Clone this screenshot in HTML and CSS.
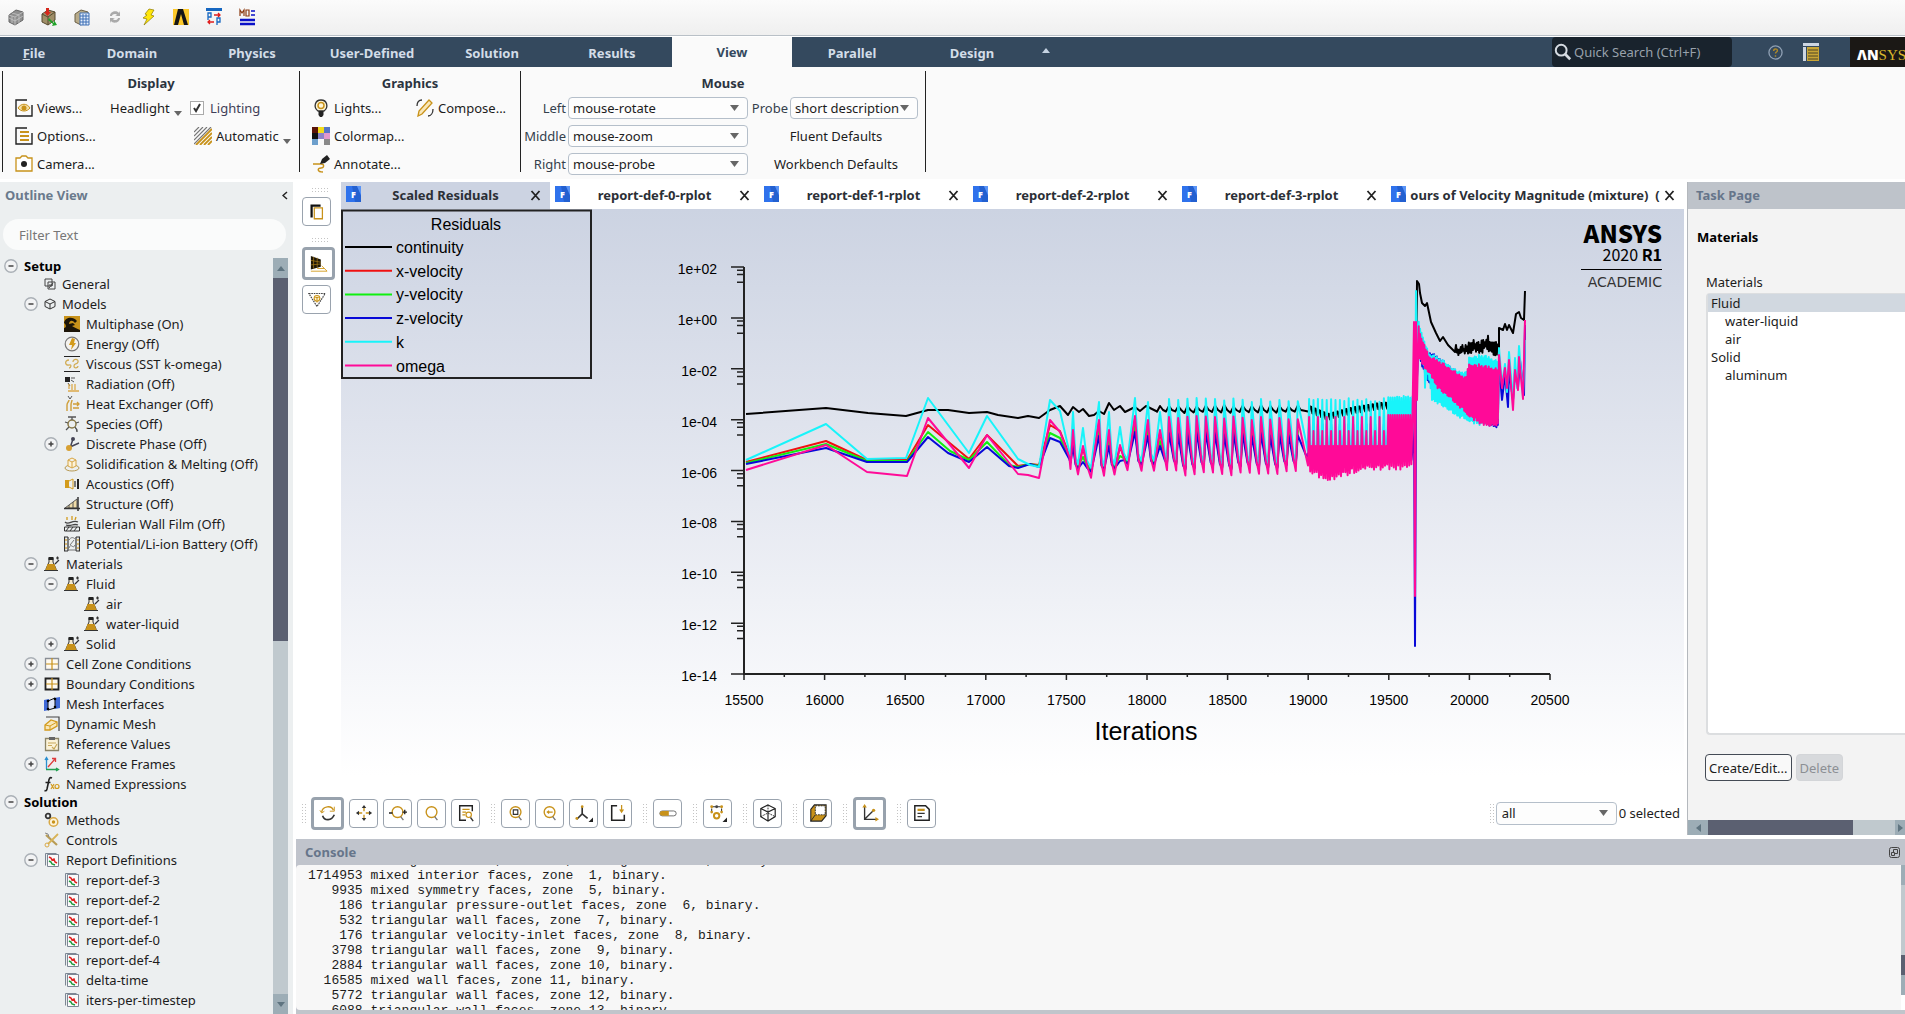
FILE: index.html
```html
<!DOCTYPE html>
<html lang="en">
<head>
    <meta charset="UTF-8">
    <meta name="viewport" content="width=device-width, initial-scale=1.0">
    <title>Fluent - Scaled Residuals</title>
    <link rel="stylesheet" href="styles.css">
</head>
<body>
    <!-- shared icons -->
    <svg class="sprite" aria-hidden="true">
        <symbol id="minus" viewBox="0 0 14 14"><circle cx="7" cy="7" r="6.2" fill="#f2f3f4" stroke="#aab0b6" stroke-width="1.4"/><path d="M4.500 7h5" stroke="#444" stroke-width="1.500"/></symbol>
        <symbol id="plus" viewBox="0 0 14 14"><circle cx="7" cy="7" r="6.2" fill="#f2f3f4" stroke="#aab0b6" stroke-width="1.4"/><path d="M4.500 7h5M7 4.500v5" stroke="#444" stroke-width="1.500"/></symbol>
        <symbol id="material" viewBox="0 0 16 16"><path d="M5 2h4v4l3 7v1H2v-1l3-7z" fill="#f4ead0" stroke="#333"/><path d="M3.500 8h7l2 6h-11z" fill="#c8921a"/><path d="M4.500 1h5v3h-5z" fill="#222"/><path d="M11 8l4-4M12 2h3M13.500 .5v3" stroke="#333" stroke-width="1.200" fill="none"/><path d="M0 14.500h14" stroke="#333"/></symbol>
        <symbol id="report" viewBox="0 0 16 16"><path d="M1.500 13.500v-12h11" fill="none" stroke="#7d8794"/><path d="M3.500 2.500h11v12h-11z" fill="#fafafa" stroke="#7d8794"/><path d="M5 5l2 1 1 2 2-1 1 3 2 1" fill="none" stroke="#e02020" stroke-width="1.500"/><path d="M5 9l2 1 1 2 3 1" fill="none" stroke="#1f9a3c" stroke-width="1.500"/></symbol>
        <symbol id="doc" viewBox="0 0 15 16"><path d="M0 0h15v16H0z" fill="#2f72ec"/><path d="M6 0h5l4 10v6H9z" fill="#2360d0"/><path d="M11 0h4v9z" fill="#5a94f5"/></symbol>
        <symbol id="close" viewBox="0 0 11 11"><path d="M1.500 1l8 9M9.500 1l-8 9" stroke="#222" stroke-width="1.800"/></symbol>
        <symbol id="down" viewBox="0 0 8 5"><path d="M0 0h8L4 5z" fill="#666"/></symbol>
        <symbol id="grid4" viewBox="0 0 16 16"><path d="M8 2v12M2 8h12" stroke="#c8921a" stroke-width="1.200"/></symbol>
        <symbol id="zoom" viewBox="0 0 20 20"><circle cx="9.500" cy="9" r="6" fill="none" stroke="#c8921a" stroke-width="1.500"/><path d="M13 14l3 4" stroke="#777" stroke-width="1.500"/></symbol>
    </svg>

    <header class="quickbar">
        <button aria-label="Mesh"><svg viewBox="0 0 16 18"><path d="M1 7l7-5 7 2v8l-8 5-6-3z" fill="#8f8f8f" stroke="#666"/><path d="M1 7l6 2 8-5M7 9v8M1 10l6 3 8-5M4 8v7M11 7v8M4 5l7 2" fill="none" stroke="#ccc" stroke-width=".7"/></svg></button>
        <button aria-label="Read case"><svg viewBox="0 0 16 18"><path d="M1 6l6-4 7 2v8l-7 5-6-3z" fill="#a08f68" stroke="#574b30"/><path d="M1 6l6 3 7-5M7 9v8" fill="none" stroke="#574b30"/><path d="M5 0h3v4h2L6.500 8 3 4h2z" fill="#d5281c"/><path d="M8 10l5 5v-3l3 5-5 1 1-2-5-4z" fill="#21a32a"/></svg></button>
        <button aria-label="Case table"><svg viewBox="0 0 16 18"><path d="M1 6l6-4 7 2v8l-7 5-6-3z" fill="#b8ab8a" stroke="#6b6047"/><path d="M6 5h9v12H6z" fill="#e6effb" stroke="#3d6fb5"/><path d="M6 8h9M6 11h9M6 14h9M9 6v11M12 6v11" stroke="#3d6fb5"/></svg></button>
        <button aria-label="Refresh"><svg viewBox="0 0 16 18"><path d="M3 8c0-5 7-6 9-3l1-2v5H8l2-1c-1-2-5-1-5 1zM13 10c0 5-7 6-9 3l-1 2v-5h5l-2 1c1 2 5 1 5-1z" fill="#aaa"/></svg></button>
        <button aria-label="Run"><svg viewBox="0 0 16 18"><path d="M9 1l5 1-3 5 3 1-10 9 3-6-4-1 4-3-2-1z" fill="#ffe60a" stroke="#8d7a00" stroke-width=".7"/></svg></button>
        <button aria-label="Workbench"><svg viewBox="0 0 16 18"><path d="M0 1h16v16H0z" fill="#fdc92b"/><path d="M1 17L5 1h5l5 16h-4L8 6 5 17z" fill="#161616"/></svg></button>
        <button aria-label="Parameters"><svg viewBox="0 0 16 18"><path d="M0 0h16v3H0z" fill="#1667c1"/><path d="M2 12V5h3v4H2M11 17v-7h3v4h-3" fill="none" stroke="#1667c1" stroke-width="1.300"/><path d="M8 7h6M12 5l2 2-2 2M8 14H2M4 12l-2 2 2 2" fill="none" stroke="#e01b1b" stroke-width="1.300"/></svg></button>
        <button aria-label="Monitor"><svg viewBox="0 0 16 18"><path d="M1 8V2l2 3 2-3v6M7 2h3v6H7z" fill="none" stroke="#8b3a10" stroke-width="1.200"/><path d="M12 3h4M12 7h4" stroke="#0a10c8" stroke-width="1.500"/><path d="M1 12h15M1 16h15" stroke="#0a10c8" stroke-width="2.500"/></svg></button>
    </header>

    <nav class="menubar">
        <a class="menu file" href="#"><u>F</u>ile</a>
        <a class="menu" href="#">Domain</a>
        <a class="menu" href="#">Physics</a>
        <a class="menu" href="#">User-Defined</a>
        <a class="menu" href="#">Solution</a>
        <a class="menu" href="#">Results</a>
        <a class="menu active" href="#">View</a>
        <a class="menu" href="#">Parallel</a>
        <a class="menu" href="#">Design</a>
        <button class="collapse" aria-label="Collapse ribbon"><svg viewBox="0 0 8 5"><path d="M0 5h8L4 0z" fill="#c5d3e2"/></svg></button>
        <div class="search">
            <svg viewBox="0 0 20 20"><circle cx="8" cy="8" r="6" fill="none" stroke="#d5dbe2" stroke-width="2.200"/><path d="M12 12l6 6" stroke="#d5dbe2" stroke-width="3"/></svg>
            <input type="text" aria-label="Quick Search" placeholder="Quick Search (Ctrl+F)">
        </div>
        <button class="help" aria-label="Help"><svg viewBox="0 0 16 16"><circle cx="8" cy="8" r="7" fill="none" stroke="#8fa0b4" stroke-width="1.400"/><path d="M6 6.500c0-3 4-3 4-.5 0 1.500-2 1.500-2 3M8 11v1.500" fill="none" stroke="#b08a28" stroke-width="1.500"/></svg></button>
        <button class="arrange" aria-label="Arrange"><svg viewBox="0 0 16 18"><path d="M0 0h16v3H0z" fill="#cdd6e2"/><path d="M0 4h3v14H0z" fill="#cdd6e2"/><path d="M4 4h12v14H4z" fill="#c8a536"/><path d="M5 7h10M5 10h10M5 13h10M5 16h10" stroke="#4c4426"/></svg></button>
        <div class="brand"><b>&Lambda;N</b><span>SYS</span></div>
    </nav>

    <section class="ribbon">
        <div class="group display">
            <h2>Display</h2>
            <div class="cols">
                <div class="col">
                    <button class="tool"><svg viewBox="0 0 18 18"><path d="M12 1H1v16h16V6" fill="none" stroke="#222" stroke-width="1.400"/><path d="M3 9c3-5 9-5 12 0-3 4-9 4-12 0z" fill="#f3dfa8" stroke="#c8921a"/><circle cx="9" cy="9" r="2.500" fill="#c8921a"/></svg>Views...</button>
                    <button class="tool"><svg viewBox="0 0 18 18"><path d="M12 1H1v16h16V6" fill="none" stroke="#222" stroke-width="1.400"/><path d="M5 5h9M5 9h9M5 13h9" stroke="#c8921a" stroke-width="2"/></svg>Options...</button>
                    <button class="tool"><svg viewBox="0 0 18 18"><path d="M1 3h4l2-2h4l2 2h4v13H1z" fill="#fff" stroke="#c8921a" stroke-width="1.300"/><circle cx="9" cy="9" r="3" fill="#222"/></svg>Camera...</button>
                </div>
                <div class="col middle">
                    <button class="tool">Headlight<svg class="caret"><use href="#down"/></svg></button>
                </div>
                <div class="col">
                    <label class="tool check"><input type="checkbox" checked>Lighting</label>
                    <button class="tool auto"><svg viewBox="0 0 18 18"><path d="M0 5l5-5M0 9l9-9M0 13L13 0M0 17L17 0" stroke="#777" stroke-width="1.200"/><path d="M2 18L18 2M6 18L18 6M10 18l8-8M14 18l4-4" stroke="#c8921a" stroke-width="1.800"/></svg>Automatic<svg class="caret"><use href="#down"/></svg></button>
                </div>
            </div>
        </div>
        <div class="group graphics">
            <h2>Graphics</h2>
            <div class="cols">
                <div class="col">
                    <button class="tool"><svg viewBox="0 0 18 18"><path d="M6 12C1 8 3 1 9 1s8 7 3 11z" fill="#fff6d8" stroke="#333" stroke-width="1.300"/><circle cx="9" cy="6.500" r="3" fill="none" stroke="#c8921a" stroke-width="1.500"/><path d="M6.500 12h5v4l-1.500 2H8l-1.500-2z" fill="#222"/></svg>Lights...</button>
                    <button class="tool"><svg viewBox="0 0 18 18"><path d="M0 0h6v6H0z" fill="#5a1408"/><path d="M6 0h6v6H6z" fill="#f2dc1c"/><path d="M12 0h6v6h-6z" fill="#5676c4"/><path d="M0 6h6v6H0z" fill="#111"/><path d="M6 6h6v6H6z" fill="#8c84c8"/><path d="M12 6h6v6h-6z" fill="#e398cc"/><path d="M0 12h6v6H0z" fill="#6d9fcc"/><path d="M12 12h6v6h-6z" fill="#8a8a8a"/></svg>Colormap...</button>
                    <button class="tool"><svg viewBox="0 0 18 18"><path d="M1 9h8c4 0 3 4 0 4-4 0-4 4 2 4" fill="none" stroke="#c8921a" stroke-width="1.400"/><path d="M8 9l2-5 5-4 3 4-5 4z" fill="#222"/></svg>Annotate...</button>
                </div>
                <div class="col">
                    <button class="tool"><svg viewBox="0 0 18 18"><path d="M1 7c0-4 2-6 5-6M17 10c0 4-2 7-5 7" fill="none" stroke="#333" stroke-width="1.300"/><path d="M2 17l1-5L13 1l3 3L6 15z" fill="#f9e7b8" stroke="#c8921a" stroke-width="1.300"/></svg>Compose...</button>
                </div>
            </div>
        </div>
        <div class="group mouse">
            <h2>Mouse</h2>
            <div class="mouse-grid">
                <label for="m-left">Left</label>
                <select id="m-left"><option>mouse-rotate</option></select>
                <label for="m-probe">Probe</label>
                <select id="m-probe"><option>short description</option></select>
                <label for="m-middle">Middle</label>
                <select id="m-middle"><option>mouse-zoom</option></select>
                <button class="tool wide">Fluent Defaults</button>
                <label for="m-right">Right</label>
                <select id="m-right"><option>mouse-probe</option></select>
                <button class="tool wide">Workbench Defaults</button>
            </div>
        </div>
    </section>

    <main class="main">
        <aside class="outline">
            <div class="outline-title">Outline View
                <button aria-label="Hide outline"><svg viewBox="0 0 6 9"><path d="M5 1L1 4.500 5 8" fill="none" stroke="#222" stroke-width="1.500"/></svg></button>
            </div>
            <input class="filter" type="text" aria-label="Filter Text" placeholder="Filter Text">
            <div class="tree-wrap">
                <ul class="tree">
                    <li class="root"><button aria-label="Collapse"><svg><use href="#minus"/></svg></button>Setup</li>
                    <li class="l1 small"><svg viewBox="0 0 12 12"><path d="M1 1h7v7H1z" fill="none" stroke="#444"/><path d="M4 4h7v7H4z" fill="none" stroke="#444"/><path d="M5 10l4-5M5 7h4" stroke="#444"/></svg>General</li>
                    <li class="l1 small"><button aria-label="Collapse"><svg><use href="#minus"/></svg></button><svg viewBox="0 0 12 12"><path d="M6 1l5 2.500v5L6 11 1 8.500v-5zM1 3.500L6 6l5-2.500M6 6v5" fill="none" stroke="#333"/></svg>Models</li>
                    <li class="l2"><svg viewBox="0 0 16 16"><path d="M0 0h16v16H0z" fill="#c8921a"/><path d="M0 16v-4c3 0 2-4 0-5 1-6 9-7 13-2l-2 2C8 3 5 5 5 8l4-1 2 2-3 1c2 1 5 3 8 4v2z" fill="#1c1508"/></svg>Multiphase (On)</li>
                    <li class="l2"><svg viewBox="0 0 16 16"><circle cx="8" cy="8" r="6.800" fill="#f4f2ee" stroke="#777" stroke-width="1.200"/><path d="M8 2l3 1-1 4h2l-5 7 1-5H5z" fill="#d39b1c"/></svg>Energy (Off)</li>
                    <li class="l2"><svg viewBox="0 0 16 16"><path d="M0 .5h16M0 15.500h16" stroke="#222" stroke-width="1.200"/><path d="M5 4c-5 0-4 6 0 5 3-1 2 3 0 3M9 6c0-4 6-3 5 0s-4 1-4 4 4 2 4 0" fill="none" stroke="#d2ad56" stroke-width="1.300"/></svg>Viscous (SST k-omega)</li>
                    <li class="l2"><svg viewBox="0 0 16 16"><path d="M1 1h5v5H1z" fill="#222"/><path d="M7 2h4M7 4l3 2M4 7l2 3" stroke="#555"/><path d="M4 15h11M5 13V8M8 14V8M11 14V8" stroke="#dba94a" stroke-width="1.300"/></svg>Radiation (Off)</li>
                    <li class="l2"><svg viewBox="0 0 16 16"><path d="M3 15V9c0-3 2-3 2-5M7 15V9c0-3 1-3 1-5" fill="none" stroke="#cf9f3a" stroke-width="1.400"/><path d="M4 0l2 3M8 0L6 3" stroke="#555"/><path d="M9 8h6M9 12h6M13 6l2 2-2 2" fill="none" stroke="#cf9f3a" stroke-width="1.300"/></svg>Heat Exchanger (Off)</li>
                    <li class="l2"><svg viewBox="0 0 16 16"><circle cx="8" cy="8" r="4" fill="none" stroke="#8a7a48" stroke-width="1.500"/><path d="M8 4V1M4 1h8M12 7l3-1M4 7L1 6M5 11l-3 3M11 11l2 3v2" stroke="#555" stroke-width="1.300"/></svg>Species (Off)</li>
                    <li class="l2"><button aria-label="Expand"><svg><use href="#plus"/></svg></button><svg viewBox="0 0 16 16"><path d="M9 3L6 12M6 11l9-4" stroke="#445" stroke-width="1.500"/><circle cx="9" cy="3" r="2" fill="#445"/><circle cx="5" cy="12" r="3" fill="#d7a032"/></svg>Discrete Phase (Off)</li>
                    <li class="l2"><svg viewBox="0 0 16 16"><ellipse cx="8" cy="12" rx="7" ry="3" fill="none" stroke="#b89a54"/><path d="M4 4l4-2 4 2v6l-4 2-4-2zM4 4l4 2 4-2M8 6v6" fill="#fdf3da" stroke="#d6a544"/></svg>Solidification &amp; Melting (Off)</li>
                    <li class="l2"><svg viewBox="0 0 16 16"><path d="M1 4h4v8H1z" fill="#d39b1c"/><path d="M5 5l4-2v10l-4-2" fill="none" stroke="#d39b1c"/><path d="M11 5v6" stroke="#555" stroke-width="1.500"/><path d="M14 3v10" stroke="#222" stroke-width="2"/></svg>Acoustics (Off)</li>
                    <li class="l2"><svg viewBox="0 0 16 16"><path d="M1 12L13 3v9z" fill="#f0dca8" stroke="#555"/><path d="M5 12V9M9 12V6" stroke="#555"/><path d="M14 1v14M0 12.500h16" stroke="#333" stroke-width="1.500"/></svg>Structure (Off)</li>
                    <li class="l2"><svg viewBox="0 0 16 16"><path d="M3 1v3M8 0v4M12 1l-1 3" stroke="#d39b1c" stroke-width="1.300"/><path d="M1 6c4 4 7-3 13 0M2 9c5 2 7-2 12 0" fill="none" stroke="#444" stroke-width="1.300"/><path d="M.5 11h15v4H.5zM2 15l3-4M6 15l3-4M10 15l3-4" fill="none" stroke="#333"/></svg>Eulerian Wall Film (Off)</li>
                    <li class="l2"><svg viewBox="0 0 16 16"><path d="M.5 1v14M4 1v14M12 1v14M15.500 1v14M0 1h4M12 1h4M0 15h4M12 15h4" stroke="#333" stroke-width="1.200"/><path d="M1 4h2M1 8h2M13 4h2M13 8h2M1 12h2M13 12h2" stroke="#d9b973" stroke-width="2"/><path d="M5 4c2-3 4-3 6-1M10 4l-4 5M5 12c2-6 4 2 6-3M5 14h6" fill="none" stroke="#777"/></svg>Potential/Li-ion Battery (Off)</li>
                    <li class="l1"><button aria-label="Collapse"><svg><use href="#minus"/></svg></button><svg><use href="#material"/></svg>Materials</li>
                    <li class="l2"><button aria-label="Collapse"><svg><use href="#minus"/></svg></button><svg><use href="#material"/></svg>Fluid</li>
                    <li class="l3"><svg><use href="#material"/></svg>air</li>
                    <li class="l3"><svg><use href="#material"/></svg>water-liquid</li>
                    <li class="l2"><button aria-label="Expand"><svg><use href="#plus"/></svg></button><svg><use href="#material"/></svg>Solid</li>
                    <li class="l1"><button aria-label="Expand"><svg><use href="#plus"/></svg></button><svg viewBox="0 0 16 16"><path d="M1.500 2.500h13v11h-13z" fill="#fffaf0" stroke="#8a8f96" stroke-width="1.300"/><use href="#grid4"/></svg>Cell Zone Conditions</li>
                    <li class="l1"><button aria-label="Expand"><svg><use href="#plus"/></svg></button><svg viewBox="0 0 16 16"><path d="M1.500 2.500h13v11h-13z" fill="#fffaf0" stroke="#222" stroke-width="1.800"/><use href="#grid4"/></svg>Boundary Conditions</li>
                    <li class="l1"><svg viewBox="0 0 16 16"><path d="M0 4l5-1v11l-5 1zM10 2l6-1v11l-5 1z" fill="#3e68d8"/><path d="M4 5l7-3v10l-7 2z" fill="#dfe6fa" stroke="#111"/><circle cx="4" cy="5" r="1.300"/><circle cx="11" cy="3" r="1.300"/><circle cx="4" cy="13" r="1.300"/><circle cx="11" cy="11" r="1.300"/></svg>Mesh Interfaces</li>
                    <li class="l1"><svg viewBox="0 0 16 16"><path d="M2 1h13v14" fill="none" stroke="#444" stroke-width="1.200"/><path d="M1 9l6-5 6 2v4l-7 4H1z" fill="#f8e7b8" stroke="#d39b1c" stroke-width="1.300"/><path d="M1 9l5 1 7-4M6 10v4" fill="none" stroke="#d39b1c"/></svg>Dynamic Mesh</li>
                    <li class="l1"><svg viewBox="0 0 16 16"><path d="M1.500 2.500h13v12h-13z" fill="#fbf2d8" stroke="#8b8467" stroke-width="1.300"/><path d="M5 1h6v3H5z" fill="#666"/><path d="M4 7h8M4 9.500h4M8 11l2 2 3-5" fill="none" stroke="#c8a85a" stroke-width="1.200"/></svg>Reference Values</li>
                    <li class="l1"><button aria-label="Expand"><svg><use href="#plus"/></svg></button><svg viewBox="0 0 16 16"><path d="M2.500 13V2M1 4l1.500-2.500L4 4" fill="none" stroke="#2a8fd0" stroke-width="1.300"/><path d="M2 13.500h12M12 12l2.500 1.500L12 15" fill="none" stroke="#22a052" stroke-width="1.300"/><path d="M4 11l7-8M8 2.500h3.500V6" fill="none" stroke="#dd3c3c" stroke-width="1.300"/></svg>Reference Frames</li>
                    <li class="l1"><svg viewBox="0 0 16 16"><path d="M8 2C6 1 5 2 4.500 6L3 13c-.5 2-1.500 2-2.500 1.500M1.500 6.500h5" fill="none" stroke="#222" stroke-width="1.600"/><path d="M7 8l3 5M10 8l-3 5" stroke="#d39b1c" stroke-width="1.200"/><circle cx="13" cy="10.500" r="2" fill="none" stroke="#d39b1c" stroke-width="1.200"/></svg>Named Expressions</li>
                    <li class="root"><button aria-label="Collapse"><svg><use href="#minus"/></svg></button>Solution</li>
                    <li class="l1"><svg viewBox="0 0 16 16"><circle cx="4" cy="4" r="2.300" fill="none" stroke="#333" stroke-width="1.800"/><circle cx="9.500" cy="10" r="4.300" fill="#fdf3da" stroke="#d8a947" stroke-width="1.500"/><circle cx="9.500" cy="10" r="1.700" fill="#c8921a"/></svg>Methods</li>
                    <li class="l1"><svg viewBox="0 0 16 16"><path d="M2 3l11 10" stroke="#b89c55" stroke-width="2.200"/><path d="M14 2L4 12" stroke="#d8b357" stroke-width="1.800"/><circle cx="3" cy="13" r="2" fill="none" stroke="#d8a947"/><path d="M1 1l3 1 1 3" fill="none" stroke="#888"/></svg>Controls</li>
                    <li class="l1"><button aria-label="Collapse"><svg><use href="#minus"/></svg></button><svg><use href="#report"/></svg>Report Definitions</li>
                    <li class="l2"><svg><use href="#report"/></svg>report-def-3</li>
                    <li class="l2"><svg><use href="#report"/></svg>report-def-2</li>
                    <li class="l2"><svg><use href="#report"/></svg>report-def-1</li>
                    <li class="l2"><svg><use href="#report"/></svg>report-def-0</li>
                    <li class="l2"><svg><use href="#report"/></svg>report-def-4</li>
                    <li class="l2"><svg><use href="#report"/></svg>delta-time</li>
                    <li class="l2"><svg><use href="#report"/></svg>iters-per-timestep</li>
                </ul>
                <div class="vscroll">
                    <button class="sb-btn" aria-label="Scroll up"><svg viewBox="0 0 8 5"><path d="M0 5h8L4 0z" fill="#5f7480"/></svg></button>
                    <div class="thumb"></div>
                    <div class="track"></div>
                    <button class="sb-btn" aria-label="Scroll down"><svg viewBox="0 0 8 5"><path d="M0 0h8L4 5z" fill="#5f7480"/></svg></button>
                </div>
            </div>
        </aside>

        <div class="work">
            <div class="upper">
                <div class="side-tools">
                    <i class="grip flat"></i>
                    <button aria-label="Copy view"><svg viewBox="0 0 20 20"><path d="M4 16V3h10" fill="none" stroke="#111" stroke-width="2.500"/><path d="M7 5.500h9v12H7z" fill="#fff" stroke="#c8921a" stroke-width="1.400"/></svg></button>
                    <i class="grip flat"></i>
                    <button class="on" aria-label="Perspective"><svg viewBox="0 0 20 20"><path d="M1 1l11 4v8L1 16z" fill="#1d1708"/><path d="M1 6l11 2M1 11l11-1M4 2v13M8 3v11" stroke="#a87b16" stroke-width=".8"/><path d="M13 12l6 6H1M8 15h8" fill="none" stroke="#d39b1c"/></svg></button>
                    <button aria-label="Probe"><svg viewBox="0 0 22 20"><path d="M1 2h20L11 18z" fill="none" stroke="#444" stroke-width="1.400" stroke-dasharray="2 1"/><circle cx="11" cy="8" r="3.500" fill="#fff4cf" stroke="#c8921a" stroke-width="1.300"/><path d="M9 7h4M11 7v6" stroke="#c8921a" stroke-width="1.300"/></svg></button>
                </div>
                <div class="viewer">
                    <div class="tabs">
                        <div class="tab current"><span class="ficon"><svg><use href="#doc"/></svg><b>F</b></span><a href="#">Scaled Residuals</a><button aria-label="Close"><svg><use href="#close"/></svg></button></div>
                        <div class="tab"><span class="ficon"><svg><use href="#doc"/></svg><b>F</b></span><a href="#">report-def-0-rplot</a><button aria-label="Close"><svg><use href="#close"/></svg></button></div>
                        <div class="tab"><span class="ficon"><svg><use href="#doc"/></svg><b>F</b></span><a href="#">report-def-1-rplot</a><button aria-label="Close"><svg><use href="#close"/></svg></button></div>
                        <div class="tab"><span class="ficon"><svg><use href="#doc"/></svg><b>F</b></span><a href="#">report-def-2-rplot</a><button aria-label="Close"><svg><use href="#close"/></svg></button></div>
                        <div class="tab"><span class="ficon"><svg><use href="#doc"/></svg><b>F</b></span><a href="#">report-def-3-rplot</a><button aria-label="Close"><svg><use href="#close"/></svg></button></div>
                        <div class="tab last"><span class="ficon"><svg><use href="#doc"/></svg><b>F</b></span><a href="#">ours of Velocity Magnitude (mixture) &nbsp;(</a><button aria-label="Close"><svg><use href="#close"/></svg></button></div>
                    </div>
                    <div class="canvas">
                        <svg id="plot" viewBox="341 209 1343 566" preserveAspectRatio="xMidYMin meet">
                            <g id="axes"></g>
                            <g id="curves"></g>
                            <g id="legend"></g>
                            <text class="axis-title" x="1146" y="740">Iterations</text>
                            <g class="logo">
                                <text class="logo-name" x="1662" y="243">ANSYS</text>
                                <text class="logo-version" x="1662" y="261">2020 <tspan class="strong">R1</tspan></text>
                                <path d="M1581 269.500h81" stroke="#000"/>
                                <text class="logo-edition" x="1662" y="287">ACADEMIC</text>
                            </g>
                        </svg>
                    </div>
                    <div class="view-tools">
                        <i class="grip"></i>
                        <button class="on" aria-label="Rotate"><svg viewBox="0 0 20 20"><path d="M3 9c1-7 11-8 13-2" fill="none" stroke="#c8921a" stroke-width="1.500"/><path d="M17 3v5h-5M1 7l2 3 3-2" fill="none" stroke="#c8921a"/><path d="M4 13c2 6 10 6 13-1" fill="none" stroke="#333" stroke-width="1.800"/></svg></button>
                        <button aria-label="Pan"><svg viewBox="0 0 20 20"><path d="M10 4v4M10 12v4M4 10h4M12 10h4" stroke="#c8921a" stroke-width="1.500"/><path d="M10 1l2.500 3.500h-5zM10 19l2.500-3.500h-5zM1 10l3.500-2.500v5zM19 10l-3.500-2.500v5z" fill="#333"/></svg></button>
                        <button aria-label="Zoom in or out"><svg viewBox="0 0 20 20"><use href="#zoom"/><path d="M0 10h4M15 9h5M17.500 6.500v5" stroke="#222" stroke-width="1.500"/></svg></button>
                        <button aria-label="Zoom box"><svg><use href="#zoom"/></svg></button>
                        <button aria-label="Zoom list"><svg viewBox="0 0 20 20"><path d="M17 8V2H3v16h7" fill="none" stroke="#222" stroke-width="1.600"/><path d="M6 6h8M6 9h4M6 12h3" stroke="#c8921a" stroke-width="1.400"/><circle cx="13" cy="12" r="3" fill="none" stroke="#c8921a" stroke-width="1.300"/><path d="M15 15l3 4" stroke="#333" stroke-width="1.500"/></svg></button>
                        <i class="grip"></i>
                        <button aria-label="Fit"><svg viewBox="0 0 20 20"><use href="#zoom"/><path d="M7 6.500h5v5H7z" fill="none" stroke="#333" stroke-width="1.300"/></svg></button>
                        <button aria-label="Last view"><svg viewBox="0 0 20 20"><use href="#zoom"/><path d="M13 9H7M9 7.500L7 9l2 1.500" fill="none" stroke="#c8921a" stroke-width="1.300"/></svg></button>
                        <button aria-label="Axis views"><svg viewBox="0 0 20 20"><path d="M8 3v8l-6 6M8 11l6 5" fill="none" stroke="#333" stroke-width="1.800"/><circle cx="8" cy="3" r="1.500" fill="#c8921a"/><circle cx="2" cy="16" r="1.500" fill="#c8921a"/><path d="M20 15v5h-5z" fill="#222"/></svg></button>
                        <button aria-label="Save picture"><svg viewBox="0 0 20 20"><path d="M9 2H3v16h14v-6" fill="none" stroke="#222" stroke-width="1.700"/><path d="M14 1v7M12 6l2 3 2-3" fill="none" stroke="#c8921a" stroke-width="1.400"/></svg></button>
                        <i class="grip"></i>
                        <button aria-label="Ruler"><svg viewBox="0 0 22 20"><rect x="1" y="7.500" width="20" height="6" rx="3" fill="#fff" stroke="#555"/><path d="M4 7.500h8v6H4a3 3 0 010-6z" fill="#c8921a"/></svg></button>
                        <i class="grip"></i>
                        <button aria-label="Display settings"><svg viewBox="0 0 20 20"><path d="M4 3h9M3 5v3M14 5v3" fill="none" stroke="#333" stroke-width="1.200"/><circle cx="8.500" cy="3" r="1.600" fill="#444"/><circle cx="3" cy="3" r="1.600" fill="#c8921a"/><circle cx="14" cy="3" r="1.600" fill="#c8921a"/><circle cx="8.500" cy="13" r="3" fill="none" stroke="#c8921a" stroke-width="2.200"/><circle cx="3" cy="9" r="1.500" fill="#c8921a"/><circle cx="14" cy="9" r="1.500" fill="#c8921a"/><path d="M20 15v5h-5z" fill="#222"/></svg></button>
                        <i class="grip"></i>
                        <button aria-label="Wireframe"><svg viewBox="0 0 20 20"><path d="M10 1l8 4v9l-8 5-8-5V5zM2 5l8 4 8-4M10 9v10" fill="none" stroke="#222" stroke-width="1.300"/><path d="M10 1v9M2 14l8-4 8 4" fill="none" stroke="#222" stroke-dasharray="2 1"/></svg></button>
                        <i class="grip"></i>
                        <button aria-label="Faces"><svg viewBox="0 0 20 20"><path d="M2 6l4-5h13v12l-5 6H2z" fill="#c8921a" stroke="#222" stroke-width="1.200"/><path d="M7 2h11v10H7z" fill="#fff" stroke="#222" stroke-dasharray="2 1"/><path d="M2 19l5-7" stroke="#222"/></svg></button>
                        <i class="grip"></i>
                        <button class="on" aria-label="Triad"><svg viewBox="0 0 20 20"><path d="M4 3v14h13M4 17l9-9" fill="none" stroke="#333" stroke-width="1.500"/><path d="M4 0l2.500 4h-5zM20 17l-4-2.500v5z" fill="#c8921a"/><circle cx="14" cy="7" r="1.800" fill="#c8921a"/></svg></button>
                        <i class="grip"></i>
                        <button aria-label="Notes"><svg viewBox="0 0 20 20"><path d="M2 2h12l4 4v12H2z" fill="#fff" stroke="#222" stroke-width="1.600"/><path d="M5 6.500h8" stroke="#c8921a" stroke-width="2.500"/><path d="M5 10.500h8M5 14h5" stroke="#333" stroke-width="1.300"/></svg></button>
                        <div class="selection">
                            <i class="grip"></i>
                            <select aria-label="Selection filter"><option>all</option></select>
                            <span>0 selected</span>
                        </div>
                    </div>
                </div>
                <aside class="task">
                    <div class="task-title">Task Page</div>
                    <div class="task-body">
                        <h3>Materials</h3>
                        <p id="mat-label">Materials</p>
                        <ul class="listbox" role="listbox" aria-labelledby="mat-label">
                            <li role="option" aria-selected="true">Fluid</li>
                            <li role="option" class="child">water-liquid</li>
                            <li role="option" class="child">air</li>
                            <li role="option">Solid</li>
                            <li role="option" class="child">aluminum</li>
                        </ul>
                        <div class="actions">
                            <button class="create">Create/Edit...</button>
                            <button class="delete" disabled>Delete</button>
                        </div>
                    </div>
                    <div class="hscroll">
                        <button class="sb-btn" aria-label="Scroll left"><svg viewBox="0 0 5 8"><path d="M5 0v8L0 4z" fill="#5f7480"/></svg></button>
                        <div class="thumb"></div>
                        <div class="track"></div>
                        <button class="sb-btn end" aria-label="Scroll right"><svg viewBox="0 0 5 8"><path d="M0 0v8l5-4z" fill="#5f7480"/></svg></button>
                    </div>
                </aside>
            </div>

            <section class="console">
                <div class="console-title">Console
                    <button aria-label="Undock"><svg viewBox="0 0 11 11"><rect x=".5" y=".5" width="10" height="10" rx="2" fill="none" stroke="#444"/><path d="M2.500 5.500h3v3h-3zM4.500 5V2.500h4v4H6" fill="none" stroke="#444"/></svg></button>
                </div>
                <div class="console-body">
<pre>    212 triangular cells, zone  4, triangular faces, binary.
1714953 mixed interior faces, zone  1, binary.
   9935 mixed symmetry faces, zone  5, binary.
    186 triangular pressure-outlet faces, zone  6, binary.
    532 triangular wall faces, zone  7, binary.
    176 triangular velocity-inlet faces, zone  8, binary.
   3798 triangular wall faces, zone  9, binary.
   2884 triangular wall faces, zone 10, binary.
  16585 mixed wall faces, zone 11, binary.
   5772 triangular wall faces, zone 12, binary.
   6088 triangular wall faces, zone 13, binary.</pre>
                    <div class="cscroll"><i class="cap"></i><i class="track"></i><i class="thumb"></i><i class="cap"></i><i class="corner"></i></div>
                </div>
            </section>
        </div>
    </main>
    <script src="plot.js"></script>
</body>
</html>
```
FILE: styles.css
```css
* {
    box-sizing: border-box;
}
body {
    display: flex;
    flex-direction: column;
    height: 100vh;
    margin: 0;
    overflow: hidden;
    background-color: #fff;
    color: #1c1c1c;
    font-family: "Noto Sans", "Open Sans", sans-serif;
    font-size: 13px;
    line-height: 20px;
}
button {
    padding: 0;
    border: none;
    background: none;
    color: inherit;
    font: inherit;
    cursor: pointer;
}
a {
    color: inherit;
    text-decoration: none;
}
svg {
    display: block;
    flex: none;
}
h2, h3, p, ul, pre {
    margin: 0;
    padding: 0;
}
.sprite {
    position: absolute;
    width: 0;
    height: 0;
}

/* top bars */
.quickbar {
    display: flex;
    flex: none;
    align-items: center;
    gap: 17px;
    height: 36px;
    padding: 0 8px 2px;
    border-bottom: 1px solid #b9c0c7;
    background: linear-gradient(#fbfbfb, #efefef);
}
.quickbar svg {
    width: 16px;
    height: 18px;
}
.menubar {
    display: flex;
    flex: none;
    height: 31px;
    border-top: 1px solid #fff;
    background-color: #34495e;
    color: #d3dde8;
    font-weight: bold;
}
.menu {
    width: 120px;
    line-height: 32px;
    text-align: center;
}
.menu.file {
    width: 68px;
    margin-right: 4px;
}
.menu.active {
    background-color: #fafafa;
    color: #34495e;
    line-height: 30px;
}
.collapse {
    padding: 0 10px 4px;
}
.collapse svg {
    width: 8px;
    height: 5px;
}
.search {
    display: flex;
    align-items: center;
    gap: 2px;
    width: 180px;
    margin-left: auto;
    padding-left: 2px;
    border-radius: 4px;
    background-color: #19232d;
}
.search svg {
    width: 18px;
    height: 18px;
}
.search input {
    flex: 1;
    min-width: 0;
    padding: 0;
    border: none;
    background: none;
    color: #d5dbe2;
    font: inherit;
    font-weight: normal;
}
.search input::placeholder {
    color: #98a1ab;
    opacity: 1;
}
.help svg {
    width: 15px;
    height: 15px;
}
.help {
    margin-left: 36px;
}
.arrange svg {
    width: 16px;
    height: 18px;
}
.arrange {
    margin: 0 31px 0 20px;
}
.brand {
    width: 55px;
    padding-left: 7px;
    overflow: hidden;
    background-color: #1b1815;
    color: #fff;
    font-size: 14px;
    line-height: 36px;
    white-space: nowrap;
}
.brand span {
    color: #d8b62d;
    font-family: "Liberation Serif", serif;
    font-size: 15px;
    font-weight: normal;
}

/* ribbon */
.ribbon {
    display: flex;
    flex: none;
    height: 115px;
    padding: 4px 2px 7px;
    background-color: #fafafa;
    border-bottom: 3px solid #fff;
}
.group {
    padding-top: 2px;
    border-left: 1px solid #222;
}
.group h2 {
    color: #2b3440;
    font-size: 13px;
    line-height: 20px;
    text-align: center;
}
.display {
    width: 297px;
}
.graphics {
    width: 221px;
}
.mouse {
    width: 406px;
    border-right: 1px solid #222;
}
.cols {
    display: flex;
    padding: 1px 0 0 12px;
}
.display .col {
    width: 95px;
}
.display .col.middle {
    width: 80px;
}
.graphics .col {
    width: 108px;
}
.tool {
    display: flex;
    align-items: center;
    gap: 4px;
    height: 28px;
    white-space: nowrap;
}
.tool svg {
    width: 18px;
    height: 18px;
}
.tool .caret {
    align-self: end;
    width: 8px;
    height: 5px;
    margin-bottom: 6px;
}
.tool.check {
    gap: 6px;
    color: #3f3f58;
}
.tool.auto {
    padding-left: 4px;
}
.check input {
    width: 14px;
    height: 14px;
    margin: 0;
    border: 1px solid #aaa;
    appearance: none;
    background: #fff url("data:image/svg+xml,%3Csvg xmlns='http://www.w3.org/2000/svg' viewBox='0 0 12 12'%3E%3Cpath d='M3 6l2 3 4-7' fill='none' stroke='%23333' stroke-width='2'/%3E%3C/svg%3E") center / 12px no-repeat;
}
.mouse-grid {
    display: grid;
    grid-template-columns: 47px 180px 42px 128px;
    grid-auto-rows: 28px;
    align-items: center;
    padding-top: 1px;
}
.mouse-grid label {
    padding-right: 2px;
    color: #34404c;
    text-align: right;
}
.mouse-grid .wide {
    grid-column: span 2;
    justify-content: center;
    padding-left: 6px;
}
select {
    height: 22px;
    padding: 0 4px;
    border: 1px solid #b5bfca;
    border-radius: 4px;
    appearance: none;
    background: #fdfdfd url("data:image/svg+xml,%3Csvg xmlns='http://www.w3.org/2000/svg' viewBox='0 0 9 6'%3E%3Cpath d='M0 0h9L4.5 6z' fill='%23666'/%3E%3C/svg%3E") right 8px center / 9px 6px no-repeat;
    color: #1c1c1c;
    font: inherit;
}

/* outline panel */
.main {
    display: flex;
    flex: 1;
    min-height: 0;
}
.outline {
    display: flex;
    flex: none;
    flex-direction: column;
    width: 293px;
    margin-right: 3px;
    background-color: #eceff0;
}
.outline-title {
    display: flex;
    justify-content: space-between;
    padding: 3px 5px 3px 5px;
    color: #6a7a8c;
    font-weight: bold;
}
.outline-title svg {
    width: 6px;
    height: 9px;
}
.filter {
    height: 31px;
    margin: 11px 7px 8px 3px;
    padding: 0 16px;
    border: none;
    border-radius: 16px;
    background-color: #fafbfb;
    font: inherit;
}
.filter::placeholder {
    color: #777;
    opacity: 1;
}
.tree-wrap {
    display: flex;
    flex: 1;
    min-height: 0;
}
.tree {
    flex: 1;
    overflow: hidden;
    list-style: none;
}
.tree li {
    display: flex;
    align-items: center;
    gap: 6px;
    height: 20px;
    white-space: nowrap;
}
.tree li.root {
    height: 16px;
    padding-left: 4px;
    color: #000;
    font-weight: bold;
}
.tree svg {
    width: 16px;
    height: 16px;
}
.tree .small > svg {
    width: 12px;
    height: 12px;
}
.tree button svg {
    width: 14px;
    height: 14px;
}
.tree .l1 { padding-left: 44px; }
.tree .l2 { padding-left: 64px; }
.tree .l3 { padding-left: 84px; }
.tree .l1 button,
.tree .l2 button {
    margin-left: -20px;
}
.vscroll {
    display: flex;
    flex-direction: column;
    width: 15px;
    margin-right: 5px;
}
.sb-btn {
    display: flex;
    flex: none;
    align-items: center;
    justify-content: center;
    background-color: #9dadb6;
}
.vscroll .sb-btn {
    height: 20px;
}
.vscroll svg {
    width: 8px;
    height: 5px;
}
.thumb {
    flex: none;
    background-color: #5b6071;
}
.vscroll .thumb {
    height: 48%;
}
.track {
    flex: 1;
    background-color: #c0c9ce;
}

/* graphics area */
.work {
    display: flex;
    flex: 1;
    flex-direction: column;
    min-width: 0;
}
.upper {
    display: flex;
    flex: 1;
    min-height: 0;
}
.side-tools {
    display: flex;
    flex: none;
    flex-direction: column;
    gap: 5px;
    width: 45px;
    padding: 5px 0 0 6px;
}
.side-tools button,
.view-tools button {
    display: flex;
    flex: none;
    align-items: center;
    justify-content: center;
    width: 29px;
    height: 29px;
    border: 1px solid #9aa3ae;
    border-radius: 4px;
    background-color: #fff;
}
.side-tools button.on,
.view-tools button.on {
    width: 33px;
    height: 33px;
    border: 3px solid #98a2ad;
}
.side-tools button svg,
.view-tools button svg {
    width: 18px;
    height: 18px;
}
.grip {
    flex: none;
    width: 5px;
    height: 20px;
    background-image: radial-gradient(circle, #c4c4c4 1px, transparent 1px);
    background-size: 3px 3px;
}
.grip.flat {
    width: 17px;
    height: 5px;
    margin: 0 0 0 9px;
}
.side-tools button + .grip.flat {
    margin-top: 6px;
}
.viewer {
    display: flex;
    flex: 1;
    flex-direction: column;
    min-width: 0;
}
.tabs {
    display: flex;
    flex: none;
    height: 27px;
    padding-bottom: 1px;
    background-color: #fff;
}
.tab {
    display: flex;
    flex: 0 1 209px;
    align-items: center;
    min-width: 0;
    padding: 0 9px 0 5px;
    color: #2b2f36;
    font-weight: bold;
}
.tab.current {
    margin-bottom: -1px;
    padding-bottom: 1px;
    background-color: #ccd3e2;
}
.tab.last {
    flex: 1 0 290px;
}
.tab a {
    flex: 1;
    overflow: hidden;
    text-align: center;
    white-space: nowrap;
}
.tab button svg {
    width: 11px;
    height: 11px;
}
.ficon {
    display: grid;
    flex: none;
    margin-bottom: 3px;
}
.ficon svg,
.ficon b {
    grid-area: 1 / 1;
    width: 15px;
    height: 16px;
}
.ficon b {
    z-index: 1;
    color: #fff;
    font-size: 9px;
    line-height: 17px;
    text-align: center;
}
.canvas {
    flex: 1;
    min-height: 0;
    background: linear-gradient(#ccd3e2, #e6e9f1 52%, #fff);
}
#plot {
    width: 100%;
    height: 100%;
    font-family: "Liberation Sans", Arial, sans-serif;
    font-size: 14px;
}
#curves path {
    fill: none;
    stroke-width: 2;
    stroke-linejoin: round;
}
#axes path {
    fill: none;
    stroke: #222;
    stroke-width: 2;
}
#axes .ticks {
    stroke-width: 1.5;
}
.y-label { text-anchor: end; }
.x-label { text-anchor: middle; }
.legend-text { font-size: 16px; }
.legend-title {
    font-size: 16px;
    text-anchor: middle;
}
.axis-title {
    font-size: 25px;
    text-anchor: middle;
}
.logo {
    font-family: "Noto Sans CJK SC", "Open Sans", sans-serif;
    text-anchor: end;
}
.logo-name {
    font-size: 24px;
    font-weight: 900;
}
.logo-version {
    font-size: 16px;
}
.strong {
    font-weight: bold;
}
.logo-edition {
    fill: #333;
    font-family: "DejaVu Sans", sans-serif;
    font-size: 14px;
}
.view-tools {
    display: flex;
    flex: none;
    align-items: center;
    gap: 5px;
    height: 64px;
    margin-left: -40px;
    padding: 12px 4px 0 0;
}
.view-tools button + .grip {
    margin: 0 1px 0 5px;
}
.selection {
    display: flex;
    align-items: center;
    gap: 2px;
    margin-left: auto;
}
.selection select {
    width: 121px;
    height: 23px;
    padding-left: 5px;
}

/* task page */
.task {
    display: flex;
    flex: none;
    flex-direction: column;
    width: 218px;
    margin: 0 0 4px 3px;
    overflow: hidden;
    border-left: 1px solid #b4b8bd;
    background-color: #f3f3f3;
}
.task-title {
    height: 27px;
    padding-left: 8px;
    background-color: #bec3ca;
    color: #66758a;
    font-weight: bold;
    line-height: 27px;
}
.task-body {
    display: flex;
    flex: 1;
    flex-direction: column;
    padding: 18px 0 39px 9px;
}
.task-body h3 {
    margin-bottom: 25px;
    color: #000;
    font-size: 13px;
}
.task-body p {
    padding-left: 9px;
}
.listbox {
    flex: 1;
    margin: 1px 0 19px 9px;
    border: 2px solid #dcdee0;
    border-width: 1px 0 2px 2px;
    border-radius: 4px 0 0 4px;
    background-color: #fff;
    line-height: 18px;
    list-style: none;
}
.listbox li {
    padding-left: 3px;
}
.listbox .child {
    padding-left: 17px;
}
.listbox [aria-selected="true"] {
    background-color: #d1d8e0;
}
.actions {
    display: flex;
    gap: 4px;
    padding-left: 8px;
}
.actions button {
    height: 27px;
    padding: 0 3px;
    border: 1px solid #444b55;
    border-radius: 4px;
    background-color: #f9f9f9;
}
.actions .delete {
    border-color: #d3d5d8;
    background-color: #d7d9dc;
    color: #8c8f94;
}
.hscroll {
    display: flex;
    height: 15px;
}
.hscroll .sb-btn {
    width: 20px;
}
.hscroll .sb-btn.end {
    width: 10px;
}
.hscroll svg {
    width: 5px;
    height: 8px;
}
.hscroll .thumb {
    width: 145px;
}

/* console */
.console {
    display: flex;
    flex: none;
    flex-direction: column;
    height: 175px;
    border-bottom: 4px solid #c0c5cb;
    background-color: #c0c4cc;
}
.console-title {
    display: flex;
    align-items: center;
    justify-content: space-between;
    height: 26px;
    padding: 0 5px 0 9px;
    color: #66758a;
    font-weight: bold;
}
.console-title svg {
    width: 11px;
    height: 11px;
}
.console-body {
    display: flex;
    flex: 1;
    min-height: 0;
    overflow: hidden;
    border-radius: 4px 0 0 4px;
    background-color: #f7f7f7;
}
.console pre {
    flex: 1;
    margin-top: -12px;
    padding-left: 12px;
    font-family: "Liberation Mono", "Courier New", monospace;
    font-size: 13px;
    line-height: 15px;
}
.cscroll {
    display: flex;
    flex-direction: column;
    width: 4px;
}
.cscroll .cap {
    height: 20px;
    background-color: #9dadb6;
}
.cscroll .thumb {
    height: 20px;
}
.cscroll .corner {
    height: 15px;
    background-color: #fff;
}
```
FILE: plot.js
```js
const NS = 'http://www.w3.org/2000/svg';
const axes = document.getElementById('axes');
const curves = document.getElementById('curves');
const legend = document.getElementById('legend');

const colors = {
    continuity: '#000',
    'x-velocity': '#f01010',
    'y-velocity': '#10f010',
    'z-velocity': '#0808d8',
    k: '#18f4fa',
    omega: '#ff0a98'
};

function add(parent, tag, attrs, text) {
    const el = document.createElementNS(NS, tag);
    for (const key in attrs) el.setAttribute(key, attrs[key]);
    if (text) el.textContent = text;
    parent.appendChild(el);
    return el;
}

function line(points) {
    return 'M' + points.map(p => p[0].toFixed(1) + ' ' + p[1].toFixed(1)).join('L');
}

// repeatable noise in -1..1
function noise(i) {
    const v = Math.sin(i * 127.1) * 43758.5;
    return (v - Math.floor(v)) * 2 - 1;
}

// linear interpolation in a list of [x, y]
function at(list, x) {
    for (let i = 1; i < list.length; i++) {
        if (x <= list[i][0]) {
            const a = list[i - 1], b = list[i];
            return a[1] + (b[1] - a[1]) * (x - a[0]) / (b[0] - a[0] || 1);
        }
    }
    return list[list.length - 1][1];
}

// axes
const left = 744, right = 1550, top0 = 267, bottom = 674;
let ticks = '';
for (let i = 0; i <= 8; i++) {
    const y = top0 + i * (bottom - top0) / 8;
    const exp = 2 - i * 2;
    ticks += `M${left - 13} ${y}H${left}`;
    if (i < 8) {
        [0.25, 0.5, 0.75].forEach(f => {
            ticks += `M${left - 7} ${(y - Math.log10(f) * 25.4).toFixed(1)}H${left}`;
        });
    }
    const name = '1e' + (exp < 0 ? '-' : '+') + String(Math.abs(exp)).padStart(2, '0');
    add(axes, 'text', { x: 717, y: y + 7, class: 'y-label' }, name);
}
for (let i = 0; i <= 20; i++) {
    const x = left + i * (right - left) / 20;
    if (i % 2 === 0) {
        ticks += `M${x} ${bottom}v6`;
        add(axes, 'text', { x: x, y: 705, class: 'x-label' }, String(15500 + i * 250));
    } else {
        ticks += `M${x} ${bottom}v3`;
    }
}
add(axes, 'path', { d: ticks, class: 'ticks' });
add(axes, 'path', { d: `M${left} ${top0}V${bottom}H${right}` });

// first iterations
const data = {
    continuity: [[746,414],[826,408],[868,413],[906,416],[928,410],[948,410],[969,413],[987,412],[998,415],[1018,418],[1028,416],[1039,418],[1050,410],[1060,406],[1068,415],[1073,407],[1079,412],[1083,409],[1089,416],[1094,415],[1099,411],[1104,414],[1109,403],[1114,410],[1120,406],[1125,412],[1135,407],[1140,411],[1146,406],[1156,411]],
    'x-velocity': [[746,462],[826,441],[867,460],[907,460],[928,425],[969,459],[987,435],[1018,466],[1030,464],[1039,465],[1050,425],[1060,431]],
    'y-velocity': [[746,463],[826,444],[867,461],[907,461],[928,432],[950,451],[969,460],[987,442],[1009,465],[1018,467],[1030,464],[1039,466],[1050,433],[1060,438]],
    'z-velocity': [[746,464],[826,448],[867,462],[907,462],[928,437],[948,453],[969,462],[987,447],[1009,466],[1018,468],[1030,464],[1039,467],[1050,438],[1060,442]],
    k: [[746,460],[826,424],[867,459],[906,458],[928,398],[969,453],[987,416],[1018,459],[1030,465],[1039,467],[1050,400],[1060,411]],
    omega: [[746,470],[826,445],[867,472],[907,476],[928,418],[969,468],[987,435],[1018,474],[1028,475],[1039,478],[1050,420],[1060,432]]
};

// [peak x, height of the k peak] of each time step
const peaks = [[1073,412],[1083,428],[1099,402],[1109,412],[1120,427],[1135,398],[1148,402],[1160,412]];
for (let x = 1169; x < 1307; x += 9.2) peaks.push([x, 400 + noise(x) * 2]);
const dips = [[1068,470],[1089,478],[1130,470],[1200,473],[1307,472]];
let before = 1068;
peaks.forEach((p, i) => {
    const x = p[0], h = p[1], low = at(dips, x) + noise(i) * 3;
    const trough = x > 1165 ? x - 2 : (before + x) / 2;
    const knee = trough - (x - before) * 0.25;
    data.k.push([knee, low - 17], [trough, low - 10], [x, h]);
    data.omega.push([knee, low - 12], [trough, low], [x, h + 18]);
    data['x-velocity'].push([knee, low - 14], [trough, low - 7], [x, h + 20]);
    data['y-velocity'].push([knee, low - 12], [trough, low - 8], [x, h + 29]);
    data['z-velocity'].push([knee, low - 10], [trough, low - 6], [x, h + 34]);
    if (x > 1156) data.continuity.push([x - 3, 412 + noise(i)], [x, 406 + noise(i + 9)], [x + 3, 410]);
    before = x;
});

// short time steps, then the solid band
const lows = [[1307,468],[1327,479],[1345,473],[1375,467],[1413,467]];
for (let x = 1308, i = 0; x < 1413; x += 1.1, i++) {
    const low = at(lows, x) + noise(i) * 3;
    const black = at([[1309,409],[1328,417],[1350,411],[1380,406],[1413,405]], x);
    const dense = x >= 1387;
    data.continuity.push([x, black + (i % 4 < 2 ? 3 : -3)]);
    if (i % 2) {
        const peak = i % 4 === 1;
        data.k.push([x, dense ? 397 + noise(i) : peak ? 400 + noise(i) * 2 : 447]);
        data.omega.push([x, dense ? 415 : peak ? (i % 8 === 1 ? 417 : 431) : 446]);
        data['z-velocity'].push([x, peak ? 424 : 450]);
    } else {
        data.k.push([x, dense ? 440 : 452]);
        data.omega.push([x, low]);
        data['z-velocity'].push([x, 460]);
    }
}

// restart and decay
data.continuity.push([1416,405],[1417,281],[1419,284],[1420,293],[1422,303],[1425,306],[1427,303],[1431,322],[1436,333],[1440,341],[1443,337],[1448,345],[1455,352]);
const mean = [[1456,351],[1465,349],[1473,346],[1480,348],[1487,343],[1492,347],[1498,350]];
for (let x = 1456, i = 0; x < 1498; x += 0.8, i++) {
    const swing = x < 1468 ? 3 : 5;
    data.continuity.push([x, at(mean, x) + (i % 2 ? swing : -swing) + noise(i) * 3]);
}
data.continuity.push([1499,352],[1499,328],[1503,330],[1505,324],[1507,330],[1509,325],[1513,333],[1516,314],[1519,312],[1521,318],[1524,320],[1525,291]);

data.omega.push([1414,322],[1415,596],[1416,322],[1417,400]);
data['z-velocity'].push([1414,400],[1415,646],[1416,400]);
data.k.push([1415,440],[1416,291],[1417,350]);
const envelopes = {
    'z-velocity': [[[1418,345],[1498,400]], [[1418,355],[1424,370],[1430,385],[1440,392],[1470,417],[1482,422],[1498,427]]],
    k: [[[1418,320],[1424,342],[1430,355],[1445,363],[1455,370],[1468,374],[1468.1,357],[1485,357],[1498,362]], [[1418,350],[1424,366],[1425,386],[1428,372],[1432,400],[1445,406],[1460,416],[1480,424],[1498,420]]],
    omega: [[[1417,320],[1422,341],[1430,358],[1445,366],[1467,379],[1468,364],[1498,370]], [[1417,355],[1424,365],[1430,374],[1438,388],[1450,396],[1468,414],[1482,424],[1498,425]]]
};
for (const name in envelopes) {
    const [high, low] = envelopes[name];
    for (let x = 1418, i = 0; x < 1498.5; x += 0.7, i++) {
        data[name].push([x, i % 2 ? at(high, x) + noise(i) * 2 : at(low, x) + noise(i + 5) * 2]);
    }
}
data.k.push([1499,348],[1502,385],[1505,364],[1507,392],[1509,352],[1513,400],[1515,358],[1517,388],[1519,346],[1523,396],[1525,340]);
data.omega.push([1499,355],[1502,388],[1505,368],[1507,388],[1509,360],[1513,410],[1515,370],[1518,390],[1519,357],[1523,399],[1525,320]);
data['z-velocity'].push([1499,364],[1502,400],[1505,375],[1508,407],[1509,370],[1513,400],[1515,372],[1518,388],[1520,360],[1524,395],[1525,325]);

for (const name in data) {
    add(curves, 'path', { d: line(data[name]), stroke: colors[name] });
}

// legend
add(legend, 'rect', { x: 342, y: 210.5, width: 249, height: 167.5, fill: 'none', stroke: '#222', 'stroke-width': 2 });
add(legend, 'text', { x: 466, y: 230, class: 'legend-title' }, 'Residuals');
Object.keys(colors).forEach((name, i) => {
    const y = 247 + i * 23.7;
    add(legend, 'path', { d: `M345 ${y}h47`, stroke: colors[name], 'stroke-width': 2 });
    add(legend, 'text', { x: 396, y: y + 6, class: 'legend-text' }, name);
});
```
